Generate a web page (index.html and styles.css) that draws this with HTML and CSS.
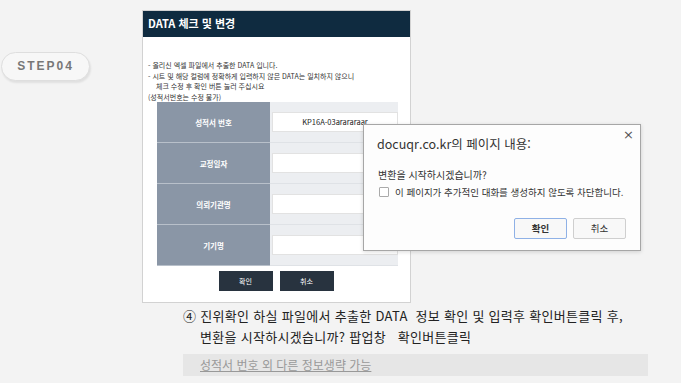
FILE: index.html
```html
<!DOCTYPE html>
<html lang="ko">
<head>
    <meta charset="UTF-8">
    <title>STEP04</title>
    <link rel="stylesheet" href="styles.css">
</head>
<body>
    <div class="step">
        <div class="step-label">STEP04</div>

        <div class="step-body">
            <!-- Screenshot of the check page -->
            <div class="shot">
                <div class="shot-head">DATA 체크 및 변경</div>
                <div class="shot-notes">
                    <p>- 올리신 엑셀 파일에서 추출한 DATA 입니다.</p>
                    <p>- 시트 및 해당 컬럼에 정확하게 입력하지 않은 DATA는 일치하지 않으니</p>
                    <p class="indent">체크 수정 후 확인 버튼 눌러 주십시요</p>
                    <p class="plain">(성적서번호는 수정 불가)</p>
                </div>
                <table class="shot-table">
                    <tr>
                        <th>성적서 번호</th>
                        <td><div class="field">KP16A-03arararaar</div></td>
                    </tr>
                    <tr>
                        <th>교정일자</th>
                        <td><div class="field"></div></td>
                    </tr>
                    <tr>
                        <th>의뢰기관명</th>
                        <td><div class="field"></div></td>
                    </tr>
                    <tr>
                        <th>기기명</th>
                        <td><div class="field"></div></td>
                    </tr>
                </table>
                <div class="shot-buttons">
                    <span class="shot-btn">확인</span>
                    <span class="shot-btn">취소</span>
                </div>
            </div>

            <!-- Browser confirm dialog -->
            <div class="dialog">
                <span class="dialog-close">&times;</span>
                <div class="dialog-title">docuqr.co.kr의 페이지 내용:</div>
                <div class="dialog-msg">변환을 시작하시겠습니까?</div>
                <label class="dialog-check"><span class="box"></span>이 페이지가 추가적인 대화를 생성하지 않도록 차단합니다.</label>
                <div class="dialog-buttons">
                    <span class="dlg-btn primary">확인</span>
                    <span class="dlg-btn">취소</span>
                </div>
            </div>

            <div class="caption">
                <p>④ 진위확인 하실 파일에서 추출한 DATA&nbsp; 정보 확인 및 입력후 확인버튼클릭 후,</p>
                <p class="indent">변환을 시작하시겠습니까? 팝업창&nbsp;&nbsp; 확인버튼클릭</p>
            </div>
            <div class="note-bar"><a href="#">성적서 번호 외 다른 정보생략 가능</a></div>
        </div>
    </div>
</body>
</html>
```

FILE: styles.css
```css
/* General */

body {
    margin: 0;
    background-color: #f3f3f3;
    font-family: "Noto Sans CJK KR", "Noto Sans", sans-serif;
    color: #333;
}

p {
    margin: 0;
}

.step {
    display: flex;
    align-items: flex-start;
    padding-top: 10px;
}

.step-label {
    margin: 42px 0 0 1px;
    width: 87px;
    height: 27px;
    line-height: 27px;
    border: 1px solid #dedede;
    border-radius: 15px;
    background-color: #f7f7f7;
    box-shadow: 1px 2px 2px rgba(0, 0, 0, 0.08);
    text-align: center;
    font-family: "Liberation Sans", Arial, sans-serif;
    font-size: 12px;
    font-weight: bold;
    letter-spacing: 2px;
    color: #777;
}

.step-body {
    position: relative;
    margin-left: 52px;
}

/* Screenshot */

.shot {
    width: 267px;
    height: 291px;
    border: 1px solid #d2d2d2;
    background: white;
}

.shot-head {
    height: 26px;
    line-height: 24px;
    background-color: #0f2b40;
    color: white;
    font-size: 11px;
    font-weight: bold;
    padding-left: 5px;
}

.shot-notes {
    padding: 23px 0 0 5px;
    font-size: 7px;
    line-height: 10.5px;
    color: #333;
}

.shot-notes .indent {
    padding-left: 8px;
}

.shot-table {
    margin: 0 0 0 14px;
    border-collapse: collapse;
    width: 241px;
}

.shot-table th {
    width: 113px;
    height: 40px;
    padding: 0;
    background-color: #8a96a6;
    color: white;
    font-size: 7.5px;
    font-weight: bold;
    border-bottom: 1px solid #b8c0ca;
}

.shot-table td {
    padding: 0 0 0 2px;
    background-color: #eceef1;
    border-bottom: 1px solid #dfe2e6;
}

.field {
    height: 18px;
    line-height: 18px;
    background: white;
    border: 1px solid #e2e2e2;
    font-size: 7.5px;
    text-align: center;
    color: #222;
}

.shot-buttons {
    display: flex;
    justify-content: center;
    gap: 7px;
    margin-top: 5px;
    padding-right: 1px;
}

.shot-btn {
    width: 54px;
    height: 20px;
    line-height: 20px;
    background-color: #28333f;
    color: white;
    font-size: 7px;
    text-align: center;
}

/* Confirm dialog */

.dialog {
    position: absolute;
    left: 221px;
    top: 114px;
    width: 276px;
    height: 125px;
    background: #fdfdfd;
    border: 1px solid #a6a6a6;
    box-shadow: 0 1px 4px rgba(0, 0, 0, 0.15);
}

.dialog-close {
    position: absolute;
    right: 6px;
    top: 2px;
    font-family: "DejaVu Sans", sans-serif;
    font-size: 13px;
    color: #555;
}

.dialog-title {
    margin: 9px 0 0 13px;
    font-size: 12.5px;
    color: #333;
}

.dialog-msg {
    margin: 14px 0 0 14px;
    font-size: 10px;
    color: #333;
}

.dialog-check {
    display: flex;
    align-items: center;
    margin: 3px 0 0 15px;
    font-size: 9.5px;
    color: #333;
}

.dialog-check .box {
    width: 8px;
    height: 8px;
    border: 1px solid #aaa;
    border-radius: 1px;
    background: white;
    margin-right: 6px;
}

.dialog-buttons {
    display: flex;
    justify-content: flex-end;
    gap: 6px;
    margin: 19px 14px 0 0;
}

.dlg-btn {
    width: 51px;
    height: 19px;
    line-height: 19px;
    border: 1px solid #cfcfcf;
    border-radius: 2px;
    background: #f8f8f8;
    text-align: center;
    font-size: 9.5px;
    color: #333;
}

.dlg-btn.primary {
    border-color: #8fb1e6;
    font-weight: bold;
}

/* Caption */

.caption {
    margin: 2px 0 0 41px;
    font-size: 13px;
    line-height: 21px;
    letter-spacing: 0.3px;
    color: #222;
    white-space: nowrap;
}

.caption .indent {
    padding-left: 17px;
}

.note-bar {
    margin: 7px 0 0 41px;
    width: 448px;
    height: 22px;
    line-height: 22px;
    padding-left: 17px;
    background-color: #e6e6e6;
    font-size: 12px;
}

.note-bar a {
    color: #999;
}
```
